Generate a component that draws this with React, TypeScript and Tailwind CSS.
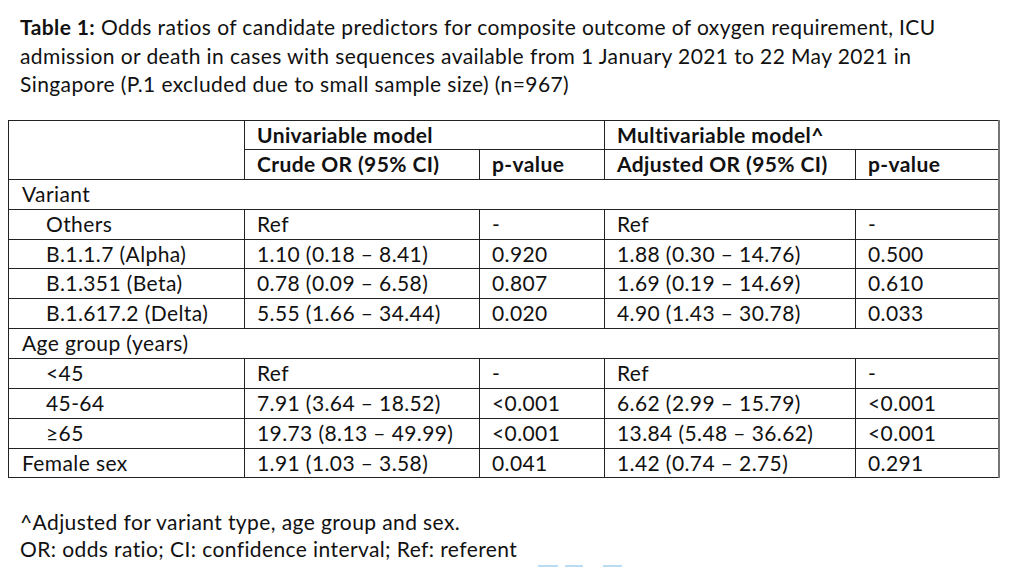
import React from "react";

type Row = {
  label: string;
  indent?: boolean;
  section?: boolean;
  c1?: string;
  p1?: string;
  c2?: string;
  p2?: string;
  h: string;
};

const rows: Row[] = [
  { label: "Variant", section: true, h: "h-[30px]" },
  { label: "Others", indent: true, c1: "Ref", p1: "-", c2: "Ref", p2: "-", h: "h-[30px]" },
  { label: "B.1.1.7 (Alpha)", indent: true, c1: "1.10 (0.18 – 8.41)", p1: "0.920", c2: "1.88 (0.30 – 14.76)", p2: "0.500", h: "h-[29px]" },
  { label: "B.1.351 (Beta)", indent: true, c1: "0.78 (0.09 – 6.58)", p1: "0.807", c2: "1.69 (0.19 – 14.69)", p2: "0.610", h: "h-[30px]" },
  { label: "B.1.617.2 (Delta)", indent: true, c1: "5.55 (1.66 – 34.44)", p1: "0.020", c2: "4.90 (1.43 – 30.78)", p2: "0.033", h: "h-[30px]" },
  { label: "Age group (years)", section: true, h: "h-[30px]" },
  { label: "<45", indent: true, c1: "Ref", p1: "-", c2: "Ref", p2: "-", h: "h-[30px]" },
  { label: "45-64", indent: true, c1: "7.91 (3.64 – 18.52)", p1: "<0.001", c2: "6.62 (2.99 – 15.79)", p2: "<0.001", h: "h-[30px]" },
  { label: "≥65", indent: true, c1: "19.73 (8.13 – 49.99)", p1: "<0.001", c2: "13.84 (5.48 – 36.62)", p2: "<0.001", h: "h-[30px]" },
  { label: "Female sex", c1: "1.91 (1.03 – 3.58)", p1: "0.041", c2: "1.42 (0.74 – 2.75)", p2: "0.291", h: "h-[29px]" },
];

const cell = "border border-[#222] px-[12px] py-0 align-middle whitespace-nowrap";

export default function App() {
  return (
    <div
      className="w-[1024px] h-[567px] bg-white text-[#111] overflow-hidden tracking-[0.4px]"
      style={{ fontFamily: "Lato, 'Open Sans', sans-serif" }}
    >
      <div className="pl-[20px] pt-[13px] text-[21px] leading-[28.5px] whitespace-nowrap">
        <span className="font-bold">Table 1:</span> Odds ratios of candidate predictors for composite outcome of oxygen requirement, ICU
        <br />
        admission or death in cases with sequences available from 1 January 2021 to 22 May 2021 in
        <br />
        Singapore (P.1 excluded due to small sample size) (n=967)
      </div>

      <table className="ml-[8px] mt-[21px] w-[990px] table-fixed border-collapse text-[21px] leading-[24px] border-r-2 border-r-[#777]">
        <colgroup>
          <col className="w-[236px]" />
          <col className="w-[235px]" />
          <col className="w-[125px]" />
          <col className="w-[251px]" />
          <col className="w-[143px]" />
        </colgroup>
        <thead>
          <tr className="h-[29px]">
            <th className={cell} rowSpan={2}></th>
            <th className={`${cell} text-left font-bold`} colSpan={2}>
              Univariable model
            </th>
            <th className={`${cell} text-left font-bold border-r-2 border-r-[#777]`} colSpan={2}>
              Multivariable model^
            </th>
          </tr>
          <tr className="h-[30px]">
            <th className={`${cell} text-left font-bold`}>Crude OR (95% CI)</th>
            <th className={`${cell} text-left font-bold`}>p-value</th>
            <th className={`${cell} text-left font-bold`}>Adjusted OR (95% CI)</th>
            <th className={`${cell} text-left font-bold border-r-2 border-r-[#777]`}>p-value</th>
          </tr>
        </thead>
        <tbody>
          {rows.map((r) =>
            r.section ? (
              <tr key={r.label} className={r.h}>
                <td className={`${cell} border-r-2 border-r-[#777] pl-[13px]`} colSpan={5}>
                  {r.label}
                </td>
              </tr>
            ) : (
              <tr key={r.label} className={r.h}>
                <td className={`${cell} ${r.indent ? "pl-[37px]" : "pl-[13px]"}`}>{r.label}</td>
                <td className={cell}>{r.c1}</td>
                <td className={cell}>{r.p1}</td>
                <td className={cell}>{r.c2}</td>
                <td className={`${cell} border-r-2 border-r-[#777]`}>{r.p2}</td>
              </tr>
            )
          )}
        </tbody>
      </table>

      <div className="pl-[20px] mt-[30px] text-[21px] leading-[27px] whitespace-nowrap">
        <div>^Adjusted for variant type, age group and sex.</div>
        <div>OR: odds ratio; CI: confidence interval; Ref: referent</div>
      </div>

      <div className="flex ml-[538px] mt-[3px] gap-[7px]">
        <div className="w-[20px] h-[4px] bg-[#b9dcf2]" />
        <div className="w-[18px] h-[4px] bg-[#b9dcf2]" />
        <div className="w-[19px] h-[4px] ml-[13px] bg-[#b9dcf2]" />
      </div>
    </div>
  );
}
